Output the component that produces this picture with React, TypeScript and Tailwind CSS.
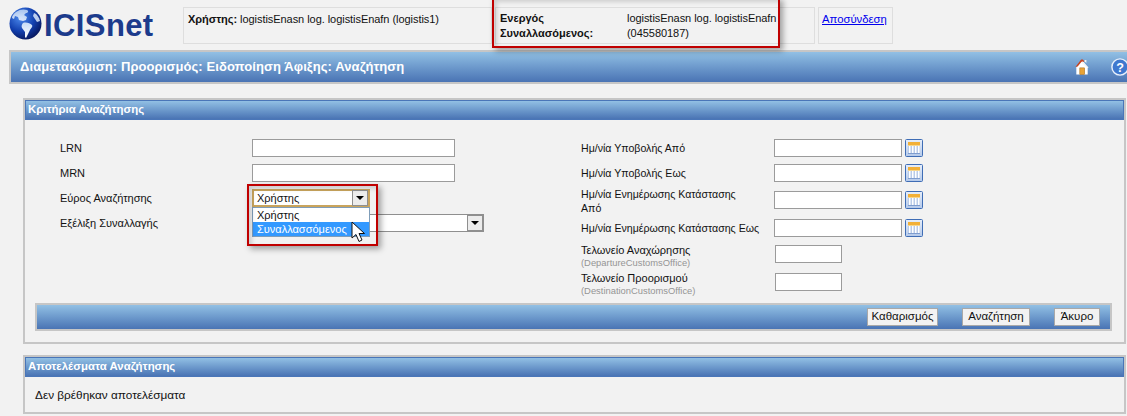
const font = { fontFamily: '"Liberation Sans", "Noto Sans", sans-serif' };

const Globe = () => (
    <svg width="33" height="33" viewBox="0 0 33 33" className="shrink-0">
        <defs>
            <radialGradient id="globe" cx="0.35" cy="0.3" r="0.8">
                <stop offset="0" stopColor="#4f8ef0" />
                <stop offset="0.55" stopColor="#123fae" />
                <stop offset="1" stopColor="#05104f" />
            </radialGradient>
            <linearGradient id="land" x1="0" y1="0" x2="0" y2="1">
                <stop offset="0" stopColor="#c7dcf7" />
                <stop offset="1" stopColor="#ffffff" />
            </linearGradient>
        </defs>
        <circle cx="16.5" cy="16.5" r="16" fill="url(#globe)" />
        <path d="M7 5c4-3 8-3 11-2 2 1 1 3-1 3l-2 2 3 2-1 3-3 1-4-1-1-3-3-1-1 3-2-1c0-3 2-4 4-6z" fill="url(#land)" opacity="0.8" />
        <path d="M14 16c3-1 7 0 9 2 1 2-1 3-2 5l-2 4-2 4-1-1v-5l-3-4c-1-2 0-4 1-5z" fill="url(#land)" />
        <path d="M25 6c3 1 5 4 6 8l-3 1-2-3-2-3z" fill="#dbe8fb" opacity="0.85" />
    </svg>
);

const CalendarIcon = () => (
    <svg width="18" height="18" viewBox="0 0 18 18" className="shrink-0">
        <defs>
            <linearGradient id="cal" x1="0" y1="0" x2="0" y2="1">
                <stop offset="0" stopColor="#e6eefa" />
                <stop offset="1" stopColor="#b4c9ea" />
            </linearGradient>
        </defs>
        <rect x="0.5" y="0.5" width="17" height="17" rx="1" fill="url(#cal)" stroke="#3f6db5" />
        <rect x="3" y="3" width="12" height="12" fill="#b9cbe8" />
        <rect x="3" y="3" width="12" height="3" fill="#f2b038" />
        <rect x="3" y="6" width="12" height="1" fill="#f7d68e" />
        <rect x="4" y="7" width="1.5" height="7" fill="#ffffff" />
        <rect x="7" y="7" width="1.5" height="7" fill="#ffffff" />
        <rect x="10" y="7" width="1.5" height="7" fill="#ffffff" />
        <rect x="13" y="7" width="1.5" height="7" fill="#ffffff" />
        <rect x="3" y="14" width="12" height="1" fill="#7f9dcf" />
    </svg>
);

const HomeIcon = () => (
    <svg width="14" height="18" viewBox="0 0 16 19">
        <path d="M1.5 9.5 L8 1.5 L14.5 9.5 V18 H1.5 Z" fill="#ffffff" />
        <path d="M0.5 9.5 L7 1 L9 1 L11 3.5 L7.5 3.5 L3 9 Z" fill="#c9431e" />
        <path d="M11 1.5 H13 V5 L11 3 Z" fill="#f3f3f3" />
        <path d="M8 3 L15.5 10 L14 10.5 L8 5 Z" fill="#f4f4f4" />
        <rect x="5.5" y="10.5" width="5.5" height="7.5" fill="#e9a336" stroke="#a86a17" strokeWidth="0.6" />
    </svg>
);

const HelpIcon = () => (
    <svg width="18" height="18" viewBox="0 0 20 20">
        <circle cx="10" cy="10" r="9" fill="#3f78cf" stroke="#e8f0fb" strokeWidth="1.6" />
        <text x="10" y="15" textAnchor="middle" fontSize="14" fontWeight="700" fill="#ffffff" fontFamily="Liberation Sans">?</text>
    </svg>
);

const Cursor = () => (
    <svg width="16" height="22" viewBox="0 0 16 22">
        <path d="M1 1 V17 L5 13.5 L8 20.5 L11 19 L8 12.5 L13.5 12.5 Z" fill="#ffffff" stroke="#111111" strokeWidth="1" strokeLinejoin="round" />
    </svg>
);

const SelectArrow = () => (
    <div className="flex h-[16px] w-[16px] items-center justify-center border border-[#8f8f8f] bg-[#ececec]">
        <div className="h-0 w-0 border-x-[4px] border-t-[4px] border-x-transparent border-t-black" />
    </div>
);

const TextBox = ({ className }: { className: string }) => (
    <input className={`h-[18px] border border-[#9b9b9b] bg-white ${className}`} />
);

const PanelHeader = ({ title }: { title: string }) => (
    <div className="flex h-[20px] items-center border border-[#4a76b8] bg-gradient-to-b from-[#92c0e4] to-[#4a74b4] pl-[2px] text-[11.4px] font-bold text-white">
        {title}
    </div>
);

const ToolButton = ({ label, className }: { label: string; className: string }) => (
    <button className={`flex h-[18px] items-center justify-center border border-[#a8a8a8] bg-[#f2f2f2] text-[11.5px] text-[#111] ${className}`}>
        {label}
    </button>
);

const LeftRow = ({ label, children }: { label: string; children: React.ReactNode }) => (
    <div className="flex h-[25px] items-start">
        <div className="w-[192px] pt-[2px] text-[11px] leading-[14px]">{label}</div>
        {children}
    </div>
);

const DateRow = ({ label, height, labelClass = "" }: { label: React.ReactNode; height: string; labelClass?: string }) => (
    <div className={`flex items-start ${height}`}>
        <div className={`w-[193px] pt-[2px] text-[10.6px] leading-[14px] ${labelClass}`}>{label}</div>
        <TextBox className="w-[128px]" />
        <div className="ml-[3px]">
            <CalendarIcon />
        </div>
    </div>
);

const OfficeRow = ({ label, code }: { label: string; code: string }) => (
    <div className="flex h-[28px] items-start">
        <div className="mt-[-1px] w-[194px] text-[11px] leading-[13px]">
            <div>{label}</div>
            <div className="text-[9.4px] leading-[11px] text-[#959595]">{code}</div>
        </div>
        <TextBox className="w-[67px]" />
    </div>
);

export default function App() {
    return (
        <div className="relative h-[416px] w-[1127px] overflow-hidden bg-[#f2f2f2] text-[#111]" style={font}>
            {/* top strip */}
            <header className="flex h-[50px] pt-[7px]">
                <div className="flex w-[183px] items-start pl-[9px]">
                    <Globe />
                    <span className="ml-[2px] text-[31px] font-bold leading-[38px] tracking-[0.4px] text-[#1c3b8c]">ICISnet</span>
                </div>
                <div className="h-[37px] w-[309px] border border-[#dedede] pl-[4px] pt-[4px] text-[11px] leading-[14px] tracking-[-0.05px]">
                    <b>Χρήστης:</b> logistisEnasn log. logistisEnafn (logistis1)
                </div>
                <div className="ml-[3px] flex h-[37px] w-[320px] border border-[#dedede] pl-[4px] pt-[3px] text-[11px] leading-[15px]">
                    <div className="w-[127px] font-bold">
                        <div>Ενεργός</div>
                        <div>Συναλλασόμενος:</div>
                    </div>
                    <div className="tracking-[-0.05px]">
                        <div>logistisEnasn log. logistisEnafn</div>
                        <div>(045580187)</div>
                    </div>
                </div>
                <div className="ml-[3px] h-[37px] w-[75px] border border-[#dedede] pl-[3px] pt-[4px] text-[11.3px] leading-[14px]">
                    <a href="#" className="text-[#0000ee] underline">Αποσύνδεση</a>
                </div>
            </header>

            {/* title bar */}
            <div className="ml-[9px] flex h-[34px] w-[1125px] items-center border-2 border-[#c6c6c6] bg-gradient-to-b from-[#92c0e4] to-[#4a74b4] pl-[9px]">
                <span className="text-[13px] font-bold tracking-[0.09px] text-white">Διαμετακόμιση: Προορισμός: Ειδοποίηση Άφιξης: Αναζήτηση</span>
                <div className="ml-auto mr-[3px] flex items-center gap-[22px]">
                    <HomeIcon />
                    <HelpIcon />
                </div>
            </div>

            {/* search criteria */}
            <section className="relative ml-[23px] mt-[14px] h-[246px] w-[1103px] border-2 border-[#c6c6c6]">
                <PanelHeader title="Κριτήρια Αναζήτησης" />
                <div className="flex pt-[19px]">
                    <div className="ml-[35px] w-[521px]">
                        <LeftRow label="LRN">
                            <TextBox className="w-[203px]" />
                        </LeftRow>
                        <LeftRow label="MRN">
                            <TextBox className="w-[203px]" />
                        </LeftRow>
                        <LeftRow label="Εύρος Αναζήτησης">
                            <div className="flex h-[18px] w-[118px] items-center justify-between border-2 border-[#c9a45c] bg-white pl-[3px] text-[11px]">
                                Χρήστης
                                <SelectArrow />
                            </div>
                        </LeftRow>
                        <LeftRow label="Εξέλιξη Συναλλαγής">
                            <div className="flex h-[18px] w-[232px] items-center justify-end border border-[#8f8f8f] bg-white">
                                <SelectArrow />
                            </div>
                        </LeftRow>
                    </div>
                    <div>
                        <DateRow label="Ημ/νία Υποβολής Από" height="h-[25px]" />
                        <DateRow label="Ημ/νία Υποβολής Εως" height="h-[27px]" />
                        <DateRow label={<>Ημ/νία Ενημέρωσης Κατάστασης<br />Από</>} height="h-[28px]" labelClass="mt-[-6px]" />
                        <DateRow label="Ημ/νία Ενημέρωσης Κατάστασης Εως" height="h-[26px]" />
                        <OfficeRow label="Τελωνείο Αναχώρησης" code="(DepartureCustomsOffice)" />
                        <OfficeRow label="Τελωνείο Προορισμού" code="(DestinationCustomsOffice)" />
                    </div>
                </div>

                {/* open dropdown */}
                <div className="absolute left-[227px] top-[107px] z-10 h-[30px] w-[118px] border border-[#7f9db9] bg-white text-[11px] leading-[14px]">
                    <div className="pl-[4px]">Χρήστης</div>
                    <div className="bg-[#3399ff] pl-[4px] text-white">Συναλλασσόμενος</div>
                </div>
                <div className="absolute left-[326px] top-[121px] z-30">
                    <Cursor />
                </div>
                <div className="absolute left-[222px] top-[84px] z-20 h-[62px] w-[131px] border-2 border-[#c00000] shadow-[3px_3px_6px_rgba(0,0,0,0.35),inset_3px_3px_4px_rgba(0,0,0,0.15)]" />

                {/* toolbar */}
                <div className="absolute left-[10px] top-[203px] flex h-[28px] w-[1077px] items-center border-2 border-[#c6c6c6] bg-gradient-to-b from-[#92c0e4] to-[#4a74b4]">
                    <ToolButton label="Καθαρισμός" className="ml-[830px] w-[71px]" />
                    <ToolButton label="Αναζήτηση" className="ml-[24px] w-[68px]" />
                    <ToolButton label="Άκυρο" className="ml-[24px] w-[46px]" />
                </div>
            </section>

            {/* results */}
            <section className="ml-[23px] mt-[11px] h-[59px] w-[1103px] border-2 border-[#c6c6c6]">
                <PanelHeader title="Αποτελέσματα Αναζήτησης" />
                <div className="pl-[10px] pt-[11px] text-[11.8px] leading-[14px]">Δεν βρέθηκαν αποτελέσματα</div>
            </section>

            {/* annotation around the trader */}
            <div className="absolute left-[492px] top-[-3px] h-[51px] w-[288px] border-2 border-[#c00000] shadow-[3px_3px_6px_rgba(0,0,0,0.35),inset_3px_3px_4px_rgba(0,0,0,0.15)]" />
        </div>
    );
}
